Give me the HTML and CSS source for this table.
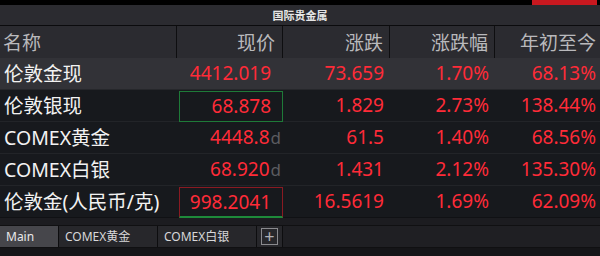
FILE: index.html
```html
<!DOCTYPE html>
<html>
<head>
<meta charset="utf-8">
<link rel="stylesheet" href="styles.css">
</head>
<body>
<div class="app">
  <div class="topbar"><div class="topmark"></div></div>
  <div class="title">国际贵金属</div>
  <div class="grid head">
    <div class="c name">名称</div>
    <div class="c num price">现价</div>
    <div class="c num">涨跌</div>
    <div class="c num">涨跌幅</div>
    <div class="c num last">年初至今</div>
  </div>
  <div class="grid row sel">
    <div class="c name">伦敦金现</div>
    <div class="c num price red">4412.019</div>
    <div class="c num red">73.659</div>
    <div class="c num red">1.70%</div>
    <div class="c num red last">68.13%</div>
  </div>
  <div class="grid row">
    <div class="c name">伦敦银现</div>
    <div class="c num price red"><span class="box green">68.878</span></div>
    <div class="c num red">1.829</div>
    <div class="c num red">2.73%</div>
    <div class="c num red last">138.44%</div>
  </div>
  <div class="grid row">
    <div class="c name">COMEX黄金</div>
    <div class="c num price red">4448.8<span class="d">d</span></div>
    <div class="c num red">61.5</div>
    <div class="c num red">1.40%</div>
    <div class="c num red last">68.56%</div>
  </div>
  <div class="grid row">
    <div class="c name">COMEX白银</div>
    <div class="c num price red">68.920<span class="d">d</span></div>
    <div class="c num red">1.431</div>
    <div class="c num red">2.12%</div>
    <div class="c num red last">135.30%</div>
  </div>
  <div class="grid row lastrow">
    <div class="c name">伦敦金(人民币/克)</div>
    <div class="c num price red"><span class="box redbox">998.2041</span></div>
    <div class="c num red">16.5619</div>
    <div class="c num red">1.69%</div>
    <div class="c num red last">62.09%</div>
  </div>
  <div class="spacer"></div>
  <div class="tabs">
    <div class="tab active">Main</div>
    <div class="tab">COMEX黄金</div>
    <div class="tab">COMEX白银</div>
    <div class="tab plus"><span class="plusbox">+</span></div>
    <div class="tabfill"></div>
  </div>
  <div class="bottom"></div>
</div>
</body>
</html>
```
FILE: styles.css
```css
html, body {
  margin: 0;
  padding: 0;
  background: #17191d;
}
body {
  width: 600px;
  height: 256px;
  overflow: hidden;
  font-family: "Noto Sans", "Noto Sans CJK SC", sans-serif;
}
.app {
  width: 600px;
  height: 256px;
  display: flex;
  flex-direction: column;
}
.topbar {
  height: 5px;
  background: #000;
  display: flex;
  justify-content: flex-end;
}
.topmark {
  width: 65px;
  height: 5px;
  margin-right: 3px;
  background: #c8181f;
}
.title {
  height: 20px;
  line-height: 20px;
  background: #2b2b30;
  color: #e6e6e6;
  font-size: 11px;
  font-weight: bold;
  text-align: center;
  border-bottom: 1px solid #0b0b0d;
  font-family: "Noto Sans CJK SC", sans-serif;
}
.grid {
  display: grid;
  grid-template-columns: 177px 106px 107px 105px 105px;
}
.head {
  height: 32px;
  background: #2b2b30;
  color: #b9b9bc;
  font-size: 19px;
  font-family: "Noto Sans CJK SC", sans-serif;
}
.head .c {
  border-right: 1px solid #0e0e10;
  line-height: 32px;
}
.head .c.last { border-right: none; }
.c {
  padding: 0 5px 0 4px;
  white-space: nowrap;
}
.head .c.name { padding-left: 3px; }
.num { text-align: right; padding-right: 6px; }
.num.price { padding-right: 12px; }
.head .num.price { padding-right: 7px; }
.last { padding-right: 4px; }
.row {
  height: 31px;
  line-height: 31px;
  font-size: 19px;
  border-bottom: 1px solid #222428;
  color: #f2f2f2;
}
.row .name { font-size: 19.5px; }
.row.sel { background: #323237; border-bottom-color: #26272b; }
.row.lastrow { border-bottom: 1px solid #101114; }
.red { color: #ff2b38; }
.num.price { position: relative; }
.d {
  color: #5c5c60;
  font-size: 17px;
  margin-right: -10px;
  margin-left: 1px;
}
.box {
  display: block;
  position: absolute;
  left: 2px;
  right: 0;
  top: 1px;
  bottom: -1px;
  padding-right: 11px;
  box-sizing: border-box;
  line-height: 29px;
}
.green { border: 1px solid #1e7a38; }
.redbox { border: 1px solid #8a1a22; border-bottom: 2px solid #1e8a3a; }
.spacer {
  height: 7px;
  background: #1c1c20;
}
.tabs {
  height: 21px;
  display: flex;
  background: #1f1f23;
  border-top: 1px solid #101012;
  border-bottom: 1px solid #101012;
  font-family: "Noto Sans", "Noto Sans CJK SC", sans-serif;
  font-size: 12px;
  color: #d8d8da;
}
.tab {
  line-height: 21px;
  padding: 0 0 0 6px;
  border-right: 1px solid #0d0d0f;
  background: #27272b;
}
.tab:nth-child(1) { width: 52px; }
.tab:nth-child(2) { width: 92px; }
.tab:nth-child(3) { width: 92px; }
.tab.active { background: #46464b; color: #e8e8ea; }
.tab.plus {
  width: 25px;
  padding: 0;
  display: flex;
  align-items: center;
  justify-content: center;
}
.plusbox {
  width: 17px;
  height: 17px;
  border: 1px solid #8a8a8e;
  color: #b0b0b4;
  font-size: 18px;
  line-height: 15px;
  text-align: center;
  box-sizing: border-box;
}
.tabfill { flex: 1; background: #1f1f23; }
.bottom {
  flex: 1;
  background: #151518;
}
```
